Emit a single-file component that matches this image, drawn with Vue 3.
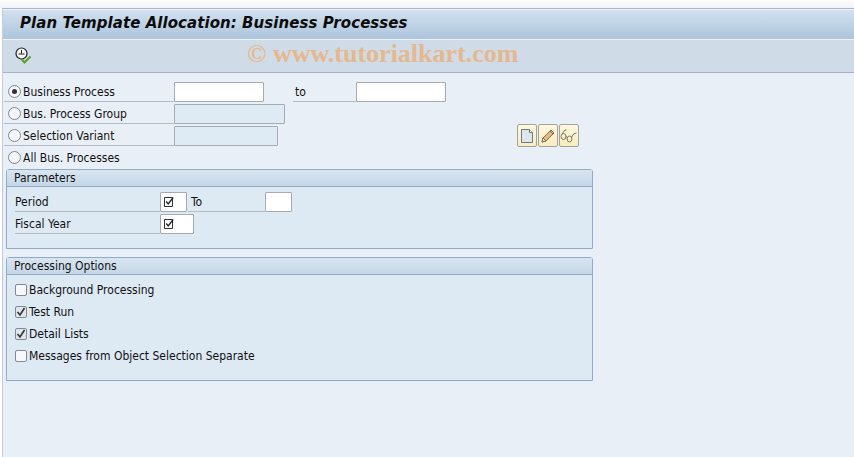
<script setup>
const selectOptions = [
  { label: 'Business Process', checked: true, fieldClass: 'w90 open' },
  { label: 'Bus. Process Group', checked: false, fieldClass: 'w111' },
  { label: 'Selection Variant', checked: false, fieldClass: 'w104' },
  { label: 'All Bus. Processes', checked: false, fieldClass: '' },
];
const processing = [
  { label: 'Background Processing', checked: false },
  { label: 'Test Run', checked: true },
  { label: 'Detail Lists', checked: true },
  { label: 'Messages from Object Selection Separate', checked: false },
];
</script>

<template>
  <div class="screen">
    <div class="top-strip"></div>
    <div class="frame">
      <header class="title-bar">
        <h1>Plan Template Allocation: Business Processes</h1>
      </header>
      <div class="toolbar">
        <button class="tool">
          <svg width="18" height="18" viewBox="0 0 18 18">
            <circle cx="6.5" cy="6.5" r="5.5" fill="#f4f6f8" stroke="#1c1c1c" stroke-width="1.2" />
            <path d="M6.5 3v3.5M3.5 7h6" fill="none" stroke="#1c1c1c" stroke-width="1" />
            <path d="M6.5 12l3 3.5 6-6" fill="none" stroke="#5da02c" stroke-width="2.2" />
          </svg>
        </button>
        <span class="watermark">© www.tutorialkart.com</span>
      </div>
      <main class="content">
        <div class="selection">
          <div v-for="(opt, i) in selectOptions" :key="opt.label" class="row">
            <div class="opt-cell" :class="{ plain: i === 3 }">
              <span class="radio" :class="{ on: opt.checked }"></span>
              <span class="radio-label">{{ opt.label }}</span>
            </div>
            <span v-if="opt.fieldClass" class="field" :class="opt.fieldClass"></span>
            <template v-if="i === 0">
              <span class="label to-label">to</span>
              <span class="field w90 open"></span>
            </template>
            <div v-if="i === 2" class="actions">
              <button class="icon-btn">
                <svg width="16" height="16" viewBox="0 0 16 16">
                  <path d="M2.5 1.5h8l3 3v10h-11z" fill="#dde6ee" stroke="#73787c" />
                  <path d="M10.5 1.5v3h3" fill="#fff" stroke="#73787c" />
                </svg>
              </button>
              <button class="icon-btn">
                <svg width="16" height="16" viewBox="0 0 16 16">
                  <path d="M2 14l1-4 8-8 3 3-8 8z" fill="#eeb47a" stroke="#77726a" />
                  <path d="M10 3l3 3" fill="none" stroke="#77726a" />
                  <path d="M2 14l1-4 3 3z" fill="#f8ecd2" stroke="#77726a" />
                </svg>
              </button>
              <button class="icon-btn">
                <svg width="18" height="16" viewBox="0 0 18 16">
                  <ellipse cx="3.5" cy="8.5" rx="2.4" ry="3" fill="none" stroke="#7d7768" />
                  <ellipse cx="9.5" cy="11" rx="2.4" ry="3" fill="none" stroke="#7d7768" />
                  <path d="M5.5 8l2 1.5M2 6l3-4h1.5M11.5 9.5l2-3.5 3-1" fill="none" stroke="#7d7768" />
                </svg>
              </button>
            </div>
          </div>
        </div>

        <section class="group params">
          <div class="group-title">Parameters</div>
          <div class="group-row first">
            <span class="label param-label">Period</span>
            <span class="field check-field w27">
              <svg width="12" height="12" viewBox="0 0 12 12">
                <path d="M1.5 1.5h8v9h-8z" fill="none" stroke="#333" />
                <path d="M3.2 5.5l2 2.5 5-6.5" fill="none" stroke="#222" stroke-width="1.3" />
              </svg>
            </span>
            <span class="label param-to">To</span>
            <span class="field w27"></span>
          </div>
          <div class="group-row">
            <span class="label param-label">Fiscal Year</span>
            <span class="field check-field w34">
              <svg width="12" height="12" viewBox="0 0 12 12">
                <path d="M1.5 1.5h8v9h-8z" fill="none" stroke="#333" />
                <path d="M3.2 5.5l2 2.5 5-6.5" fill="none" stroke="#222" stroke-width="1.3" />
              </svg>
            </span>
          </div>
        </section>

        <section class="group options">
          <div class="group-title">Processing Options</div>
          <div class="checks">
            <div v-for="item in processing" :key="item.label" class="check-row">
              <span class="check" :class="{ on: item.checked }">
                <svg v-if="item.checked" width="10" height="10" viewBox="0 0 10 10">
                  <path d="M1.5 5l2.5 3 4.5-7" fill="none" stroke="#333" stroke-width="1.6" />
                </svg>
              </span>
              <span class="check-text">{{ item.label }}</span>
            </div>
          </div>
        </section>
      </main>
    </div>
  </div>
</template>

<style>
html, body { margin: 0; padding: 0; }
</style>

<style scoped>
.screen {
  width: 854px;
  height: 457px;
  overflow: hidden;
  background: #fff;
  font-family: "DejaVu Sans Condensed", "Liberation Sans", sans-serif;
  font-size: 12px;
  color: #111;
  display: flex;
  flex-direction: column;
}
.top-strip {
  height: 8px;
  flex: none;
  background: linear-gradient(#fdfdfe, #f1f3f8);
}
.frame {
  flex: 1;
  margin-left: 2px;
  border-left: 1px solid #c3cdd9;
  border-top: 1px solid #a9b4c4;
  background: #e8eff7;
  display: flex;
  flex-direction: column;
}
.title-bar {
  height: 31px;
  flex: none;
  box-sizing: border-box;
  background: linear-gradient(#d2e0ef, #adc5dc);
  border-top: 1px solid #eef3f8;
  border-bottom: 1px solid #eef3f8;
  display: flex;
  align-items: center;
  padding: 0 0 3px 17px;
}
.title-bar h1 {
  margin: 0;
  font-family: "DejaVu Sans", sans-serif;
  font-size: 15px;
  font-weight: 700;
  font-style: italic;
  letter-spacing: 0.06px;
  color: #0c0c0c;
  white-space: nowrap;
}
.toolbar {
  position: relative;
  height: 33px;
  flex: none;
  box-sizing: border-box;
  background: #cfdce7;
  border-bottom: 1px solid #a3b2c7;
  display: flex;
  align-items: center;
  padding-left: 12px;
}
.tool {
  padding: 0;
  border: 0;
  background: none;
  width: 18px;
  height: 18px;
}
.watermark {
  position: absolute;
  left: 244px;
  top: 0;
  font-family: "Liberation Serif", serif;
  font-weight: 700;
  font-size: 26px;
  line-height: 27px;
  color: #e5b88f;
  white-space: nowrap;
}
.content {
  padding: 9px 0 0 1px;
}
.selection {
  display: flex;
  flex-direction: column;
  gap: 2px;
  margin-bottom: 1px;
}
.row {
  position: relative;
  display: flex;
  height: 20px;
  align-items: stretch;
}
.opt-cell {
  display: flex;
  width: 170px;
  box-sizing: border-box;
  padding-left: 4px;
  border-bottom: 1px solid #b6bbc2;
}
.opt-cell.plain {
  border-bottom: 0;
}
.radio {
  width: 13px;
  height: 13px;
  flex: none;
  box-sizing: border-box;
  margin-top: 3px;
  border: 1px solid #85888c;
  border-radius: 50%;
  background: #f3f6fa;
  display: flex;
  align-items: center;
  justify-content: center;
}
.radio.on::after {
  content: "";
  width: 5px;
  height: 5px;
  border-radius: 50%;
  background: #333;
}
.radio-label {
  padding-left: 2px;
  line-height: 21px;
  white-space: nowrap;
}
.label {
  line-height: 21px;
  white-space: nowrap;
  box-sizing: border-box;
  border-bottom: 1px solid #b6bbc2;
}
.field {
  display: block;
  box-sizing: border-box;
  height: 20px;
  flex: none;
  background: #deeaf4;
  border: 1px solid #a4abb3;
  border-radius: 1px;
}
.field.open {
  background: #fff;
}
.w90 { width: 90px; }
.w111 { width: 111px; }
.w104 { width: 104px; }
.w27 { width: 27px; background: #fff; }
.w34 { width: 34px; background: #fff; }
.to-label {
  width: 63px;
  margin-left: 29px;
  padding-left: 2px;
}
.actions {
  position: absolute;
  left: 513px;
  top: -2px;
  display: flex;
  gap: 1px;
}
.icon-btn {
  width: 20px;
  height: 23px;
  padding: 0;
  box-sizing: border-box;
  background: linear-gradient(#fdf8e0, #f9ecbd);
  border: 1px solid #a3a399;
  border-radius: 2px;
  display: flex;
  align-items: center;
  justify-content: center;
}
.group {
  margin: 0 261px 0 2px;
  box-sizing: border-box;
  background: #dde9f3;
  border: 1px solid #8fabc8;
  border-radius: 3px 3px 0 0;
}
.params {
  height: 80px;
  margin-bottom: 8px;
}
.options {
  height: 124px;
}
.group-title {
  height: 17px;
  box-sizing: border-box;
  padding-left: 7px;
  line-height: 17px;
  background: linear-gradient(#d9e6f1, #c4d6e7);
  border-bottom: 1px solid #8fabc8;
}
.group-row {
  display: flex;
  height: 20px;
  margin-top: 2px;
  margin-left: 8px;
}
.group-row.first {
  margin-top: 5px;
}
.param-label {
  width: 145px;
}
.param-to {
  width: 77px;
  margin-left: 1px;
  padding-left: 3px;
}
.check-field {
  display: flex;
  align-items: center;
  padding-left: 2px;
}
.checks {
  display: flex;
  flex-direction: column;
  gap: 2px;
  padding: 5px 0 0 8px;
}
.check-row {
  display: flex;
  align-items: center;
  height: 20px;
}
.check {
  width: 12px;
  height: 12px;
  box-sizing: border-box;
  border: 1px solid #85888c;
  border-radius: 2px;
  background: #f6f8fb;
  display: flex;
  align-items: center;
  justify-content: center;
}
.check.on {
  background: #dfe5ec;
}
.check-text {
  margin-left: 2px;
}
</style>
